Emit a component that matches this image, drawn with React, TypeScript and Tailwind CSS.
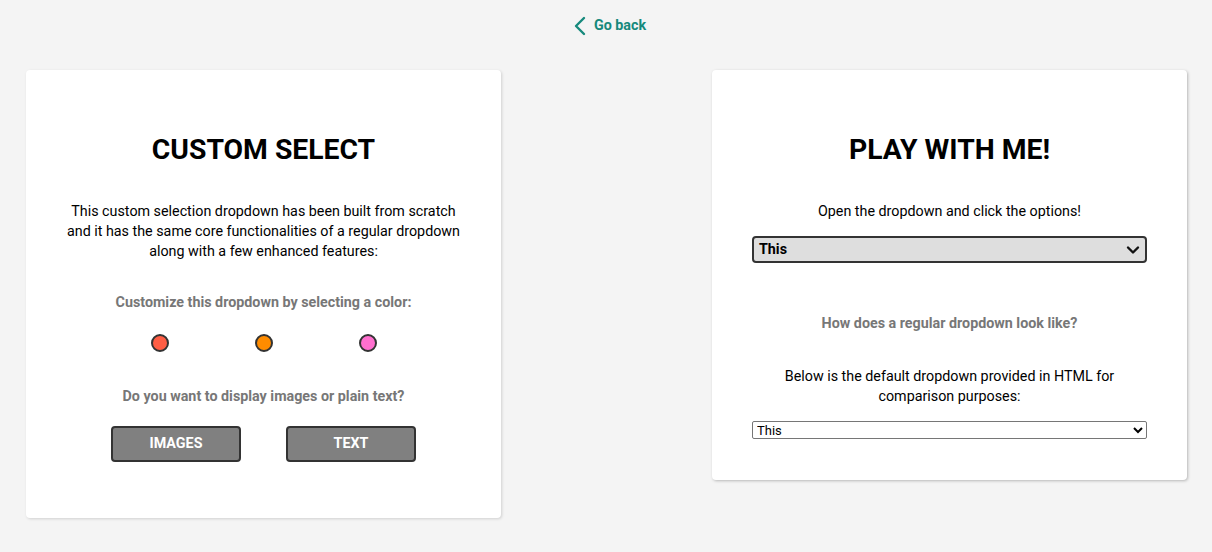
import React from 'react';

const colors = ['bg-[#ff5e45]', 'bg-[#ff8c00]', 'bg-[#ff6fcf]'];

function ChevronLeft() {
  return (
    <svg width="14" height="20" viewBox="0 0 14 20" fill="none">
      <path d="M11 2 L3 10 L11 18" stroke="#16897c" strokeWidth="2.4" strokeLinecap="round" strokeLinejoin="round" />
    </svg>
  );
}

function ChevronDown() {
  return (
    <svg width="14" height="10" viewBox="0 0 14 10" fill="none">
      <path d="M2 2.5 L7 7.5 L12 2.5" stroke="#111" strokeWidth="2.4" strokeLinecap="round" strokeLinejoin="round" />
    </svg>
  );
}

export default function App() {
  return (
    <div className="min-h-[552px] bg-[#f4f4f4] font-['Roboto',sans-serif] text-black">
      {/* back link */}
      <div className="flex justify-center pt-[16px] pl-[7px]">
        <a href="#" className="flex items-center gap-[7px] h-5 text-[14.3px] font-bold text-[#16897c]">
          <ChevronLeft />
          <span>Go back</span>
        </a>
      </div>

      <div className="flex justify-between items-start pl-[26px] pr-[25px] mt-[34px]">
        {/* left card */}
        <div className="w-[475px] bg-white rounded-[4px] shadow-[1px_1px_3px_rgba(0,0,0,0.15)] px-10 pt-[63px] pb-[56px] flex flex-col items-center text-center">
          <h1 className="text-[28.3px] leading-[34px] font-bold">CUSTOM SELECT</h1>
          <p className="mt-[34px] text-[14.3px] leading-[20px]">
            This custom selection dropdown has been built from scratch and it has the same core functionalities of a regular dropdown along with a few enhanced features:
          </p>
          <p className="mt-[31px] text-[14.3px] leading-[20px] font-bold text-[#777]">
            Customize this dropdown by selecting a color:
          </p>
          <div className="mt-[22px] flex gap-[86px]">
            {colors.map((c) => (
              <button key={c} className={`w-[18px] h-[18px] rounded-full border-2 border-[#333] ${c}`} />
            ))}
          </div>
          <p className="mt-[34px] text-[14.3px] leading-[20px] font-bold text-[#777]">
            Do you want to display images or plain text?
          </p>
          <div className="mt-[20px] flex gap-[45px]">
            <button className="w-[130px] h-[36px] bg-[#808080] border-2 border-[#333] rounded-[4px] text-white text-[14.3px] font-bold">
              IMAGES
            </button>
            <button className="w-[130px] h-[36px] bg-[#808080] border-2 border-[#333] rounded-[4px] text-white text-[14.3px] font-bold">
              TEXT
            </button>
          </div>
        </div>

        {/* right card */}
        <div className="w-[475px] bg-white rounded-[4px] shadow-[1px_1px_3px_rgba(0,0,0,0.25)] px-10 pt-[63px] pb-[41px] flex flex-col items-center text-center">
          <h1 className="text-[28.3px] leading-[34px] font-bold">PLAY WITH ME!</h1>
          <p className="mt-[34px] text-[14.3px] leading-[20px]">Open the dropdown and click the options!</p>
          <div className="mt-[15px] w-full h-[27px] bg-[#dedede] border-2 border-[#333] rounded-[4px] flex items-center justify-between pl-[5px] pr-[5px]">
            <span className="text-[14.3px] font-bold">This</span>
            <ChevronDown />
          </div>
          <p className="mt-[50px] text-[14.3px] leading-[20px] font-bold text-[#777]">
            How does a regular dropdown look like?
          </p>
          <p className="mt-[33px] text-[14.3px] leading-[20px] px-[28px]">
            Below is the default dropdown provided in HTML for comparison purposes:
          </p>
          <select className="mt-[15px] w-full h-[18px] border border-[#767676] rounded-[2px] text-[13px] bg-white" defaultValue="This">
            <option>This</option>
            <option>That</option>
          </select>
        </div>
      </div>
    </div>
  );
}
